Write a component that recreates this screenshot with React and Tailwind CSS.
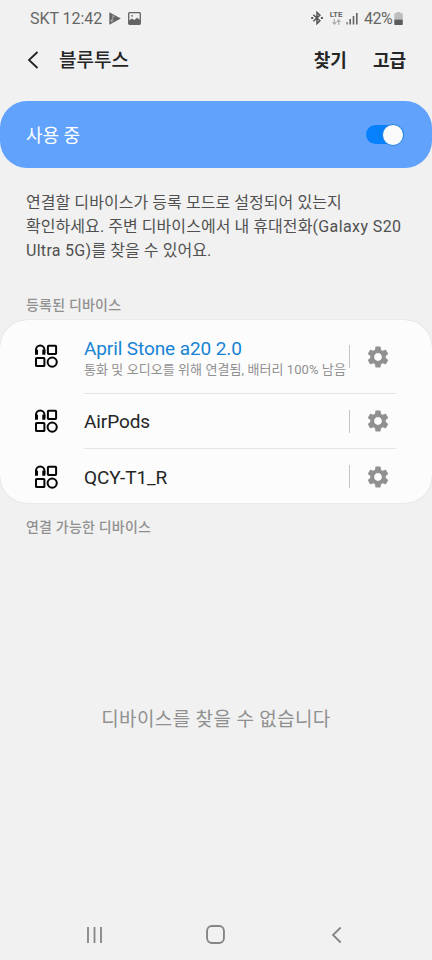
import React, { useState } from 'react';
import { MdSettings } from 'react-icons/md';

const devices = [
  {
    id: 'april-stone',
    name: 'April Stone a20 2.0',
    status: '통화 및 오디오를 위해 연결됨, 배터리 100% 남음',
    connected: true,
  },
  { id: 'airpods', name: 'AirPods' },
  { id: 'qcy', name: 'QCY-T1_R' },
];

// Headphones, two squares and a circle in a 2x2 grid
const DeviceIcon = () => (
  <svg className="h-6 w-6 shrink-0" viewBox="0 0 24 24" fill="none" stroke="#050505" strokeWidth="2">
    <path d="M2 9V5.8a4.2 4.2 0 0 1 8.4 0V9" />
    <path d="M2.5 5.8v5M9.8 5.8v5" strokeWidth="3" />
    <rect x="13.9" y="1.7" width="8.2" height="8.2" rx="0.7" />
    <rect x="2" y="13.9" width="8.4" height="8.2" rx="0.7" />
    <circle cx="18.2" cy="18.1" r="4.6" />
  </svg>
);

const StatusBar = () => (
  <div className="flex h-9 items-center pr-[29px] pl-[30px] pt-0.5 text-[#666]">
    <span className="text-[16px] tracking-[-0.05px]">SKT 12:42</span>
    <svg className="mb-0.5 ml-[7px] h-[13px] w-3" viewBox="0 0 12 13">
      <path d="M0.3 0.3L11.8 6.4 0.3 12.7z" fill="#636363" />
      <path d="M3.8 3.5v5M3.8 3.7l2 1.3" stroke="#aaa" fill="none" />
      <circle cx="2.7" cy="8.8" r="1.2" fill="#aaa" />
    </svg>
    <svg className="mb-0.5 ml-[7px] h-[13px] w-[13px]" viewBox="0 0 13 13">
      <rect x="0.7" y="0.7" width="11.6" height="11.6" rx="0.8" fill="none" stroke="#636363" strokeWidth="1.3" />
      <path d="M1 8.5l3-2 2.2 1.5 3-2.3L12 8v4.2H1z" fill="#636363" />
      <circle cx="4" cy="3.8" r="0.9" fill="#636363" />
    </svg>

    <div className="ml-auto flex items-center">
      <svg className="mb-0.5 h-[14px] w-3" viewBox="0 0 12 14" fill="none" stroke="#555" strokeWidth="1.5">
        <path d="M2.3 3.7l6.6 6.1L6 12.6V1.4l2.9 2.8-6.6 6.1" />
        <path d="M0.2 7h2M9.9 7h2" strokeWidth="1.8" />
      </svg>
      <div className="mb-0.5 ml-[6px] flex w-[14px] flex-col items-center">
        <span className="text-[8px] leading-[8px] font-bold">LTE</span>
        <svg className="h-[6px] w-[9px]" viewBox="0 0 9 6" fill="none" stroke="#aaa" strokeWidth="1.1">
          <path d="M2.4 0v5.2M0.5 3.2l1.9 2 1.9-2M6.7 6V0.8M4.8 2.8l1.9-2 1.9 2" />
        </svg>
      </div>
      <svg className="mb-0.5 ml-[3px] h-[13px] w-3" viewBox="0 0 12 13" fill="#636363">
        <rect x="0.5" y="10" width="1.2" height="2.5" />
        <rect x="3.4" y="7" width="1.6" height="5.5" />
        <rect x="6.7" y="4" width="1.6" height="8.5" />
        <rect x="10" y="1" width="1.6" height="11.5" />
      </svg>
      <span className="ml-[6px] text-[16px] tracking-[-0.6px]">42%</span>
      <svg className="mb-0.5 ml-[2px] h-[13px] w-[9px]" viewBox="0 0 9 13">
        <path d="M2.7 0h3.6v1.2h1.9q.6 0 .6.6V7.5H.3V1.8q0-.6.6-.6h1.8z" fill="#bdbdbd" />
        <path d="M.3 7.5h8.5v4.8q0 .6-.6.6H.9q-.6 0-.6-.6z" fill="#5c5c5c" />
      </svg>
    </div>
  </div>
);

const DeviceRow = ({ device, last }) => (
  <div className="flex flex-1 pl-[34px]">
    <div className={`flex items-center ${last ? 'pt-px' : 'pb-0.5'}`}>
      <DeviceIcon />
    </div>
    <div
      className={`ml-[26px] mr-9 flex flex-1 items-center ${last ? 'pt-px' : 'border-b border-[#e5e5e5]'}`}
    >
      <button className="flex min-w-0 flex-1 flex-col items-start pt-0.5 whitespace-nowrap">
        <span
          className={`text-[19px] leading-6 tracking-[-0.1px] ${device.connected ? 'text-[#1683d4]' : 'text-[#252525]'}`}
        >
          {device.name}
        </span>
        {device.status && (
          <span className="text-[13px] leading-[18px] tracking-[0.07px] text-[#909090]">{device.status}</span>
        )}
      </button>
      <div className="flex items-center">
        <span className="h-[23px] w-px bg-[#c5c5c5]" />
        <button className="mr-[5px] ml-[15px]">
          <MdSettings className="h-[26px] w-[26px] text-[#909090]" />
        </button>
      </div>
    </div>
  </div>
);

const App = () => {
  const [enabled, setEnabled] = useState(true);

  return (
    <div
      lang="ko"
      className="flex h-[960px] w-[432px] flex-col overflow-hidden bg-[#f1f1f1] font-[Roboto,'Noto_Sans_CJK_KR',sans-serif]"
    >
      <StatusBar />

      <header className="flex h-12 items-center pr-[26px] pl-[27px] text-[19px] font-medium text-[#252525]">
        <svg className="mb-px h-[18px] w-3" viewBox="0 0 12 18" fill="none" stroke="#222" strokeWidth="1.8">
          <path d="M10.5 1L2 9l8.5 8" />
        </svg>
        <h1 className="ml-5 pt-0.5">블루투스</h1>
        <div className="ml-auto flex gap-[26px] text-[18px] font-bold">
          <button>찾기</button>
          <button>고급</button>
        </div>
      </header>

      <section className="mt-[17px] flex h-[67px] shrink-0 items-center justify-between rounded-[27px] bg-[#61a2fd] pr-7 pl-[26px]">
        <span className="pt-0.5 text-[18px] text-white">사용 중</span>
        <button
          role="switch"
          aria-checked={enabled}
          onClick={() => setEnabled(!enabled)}
          className={`flex h-[19px] w-[38px] items-center rounded-full bg-[#0780fc] ${enabled ? 'justify-end' : 'justify-start'}`}
        >
          <span className="h-[22px] w-[22px] shrink-0 rounded-full border border-[#2684df] bg-[#fafafa]" />
        </button>
      </section>

      <p className="mt-[23px] pl-[26px] text-[16px] leading-6 tracking-[0.06px] whitespace-nowrap text-[#505050]">
        연결할 디바이스가 등록 모드로 설정되어 있는지
        <br />
        확인하세요. 주변 디바이스에서 내 휴대전화<span className="tracking-[0.4px]">(Galaxy S20</span>
        <br />
        <span className="tracking-[0.3px]">Ultra 5G)</span>를 찾을 수 있어요.
      </p>

      <h2 className="mt-8 pl-[26px] text-[14px] leading-5 font-medium tracking-[0.2px] text-[#909090]">등록된 디바이스</h2>
      <section className="mt-[5px] grid h-[183px] shrink-0 grid-rows-[74px_55px_54px] rounded-[27px] bg-[#fcfcfc] shadow-[0_0_1px_#bbb]">
        {devices.map((device, idx) => (
          <DeviceRow key={device.id} device={device} last={idx === devices.length - 1} />
        ))}
      </section>

      <h2 className="mt-[14px] pl-[26px] text-[14px] leading-5 font-medium tracking-[0.2px] text-[#909090]">연결 가능한 디바이스</h2>
      <p className="mt-[169px] text-center text-[19px] leading-7 tracking-[0.37px] text-[#909090]">디바이스를 찾을 수 없습니다</p>

      <nav className="mt-auto flex h-[51px] items-center pl-[86px]">
        <svg className="h-[18px] w-[18px]" viewBox="0 0 18 18" stroke="#858585" strokeWidth="1.8">
          <path d="M2 1v16M8.5 1v16M15 1v16" />
        </svg>
        <svg className="ml-[102px] h-[19px] w-[19px]" viewBox="0 0 18 18" fill="none" stroke="#858585" strokeWidth="1.8">
          <rect x="1" y="1" width="16" height="16" rx="4.6" />
        </svg>
        <svg className="ml-[106px] h-[18px] w-[11px]" viewBox="0 0 11 18" fill="none" stroke="#858585" strokeWidth="1.8">
          <path d="M9.7 1.5L2 9l7.7 7.5" />
        </svg>
      </nav>
    </div>
  );
};

export default App;
